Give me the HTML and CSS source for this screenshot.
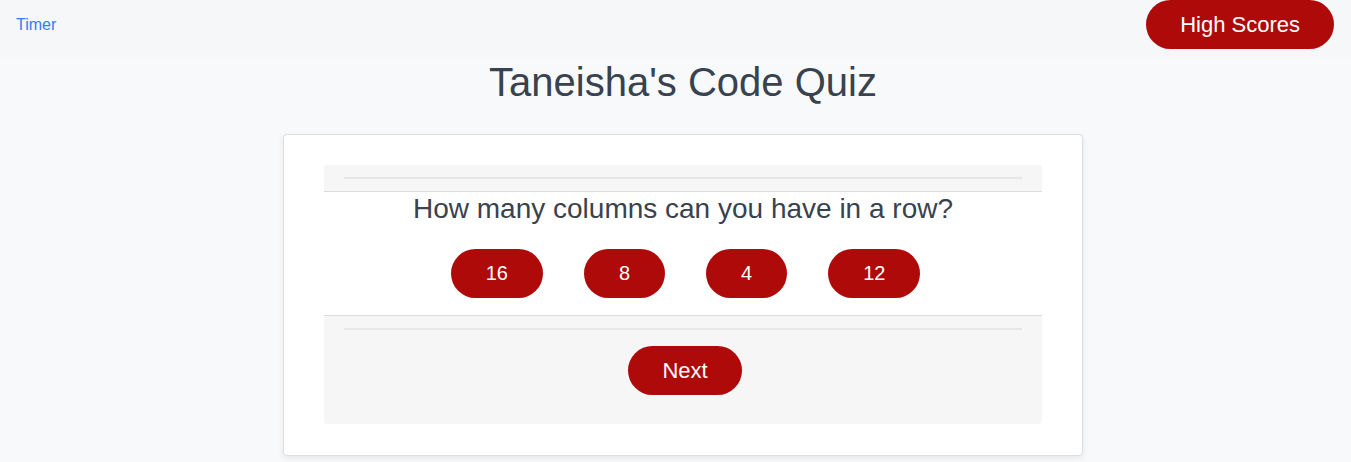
FILE: index.html
```html
<!DOCTYPE html>
<html lang="en">
<head>
<meta charset="utf-8">
<title>Taneisha's Code Quiz</title>
<link rel="stylesheet" href="styles.css">
</head>
<body>
<nav class="topbar">
  <a class="timer" href="#">Timer</a>
  <button class="btn btn-lg" type="button">High Scores</button>
</nav>
<main class="page">
  <h1 class="title">Taneisha's Code Quiz</h1>
  <section class="card">
    <div class="quiz">
      <div class="quiz-head"><hr class="rule"></div>
      <div class="quiz-body">
        <p class="question">How many columns can you have in a row?</p>
        <div class="answers">
          <button class="btn" type="button">16</button>
          <button class="btn" type="button">8</button>
          <button class="btn" type="button">4</button>
          <button class="btn" type="button">12</button>
        </div>
      </div>
      <div class="quiz-foot">
        <hr class="rule">
        <button class="btn btn-next" type="button">Next</button>
      </div>
    </div>
  </section>
</main>
</body>
</html>
```

FILE: styles.css
```css
* { box-sizing: border-box; }

body {
  margin: 0;
  background: #f8f9fb;
  font-family: "Liberation Sans", Arial, sans-serif;
  color: #39424f;
}

.topbar {
  height: 57px;
  background: #f6f7f9;
  display: flex;
  justify-content: space-between;
  align-items: center;
  padding: 0 17px 8px 16px;
}

.timer {
  color: #2f7ef5;
  text-decoration: none;
  font-size: 16px;
}

.btn {
  border: none;
  background: #ae0a0a;
  color: #fff;
  font-family: "Liberation Sans", Arial, sans-serif;
  font-size: 20px;
  line-height: 25px;
  padding: 12px 35px;
  border-radius: 25px;
  cursor: pointer;
}

.btn-lg {
  font-size: 22px;
  padding: 12px 34px;
}

.page {
  padding-left: 15px;
  padding-bottom: 20px;
}

.title {
  margin: 2px 0 29px;
  text-align: center;
  font-size: 40px;
  line-height: 46px;
  font-weight: normal;
  color: #39424f;
}

.card {
  width: 800px;
  margin: 0 auto;
  background: #fff;
  border: 1px solid #dedede;
  border-radius: 4px;
  box-shadow: 0 2px 6px rgba(0, 0, 0, 0.08);
  padding: 30px 40px 31px;
}

.quiz-head {
  background: #f6f6f6;
  border-bottom: 1px solid #dcdcdc;
  border-radius: 3px 3px 0 0;
  padding: 12px 20px;
}

.rule {
  margin: 0;
  border: none;
  height: 2px;
  background: #e6e6e6;
}

.quiz-body {
  padding: 0 0 17px;
  text-align: center;
}

.question {
  margin: 0;
  font-size: 28px;
  line-height: 34px;
}

.answers {
  display: flex;
  justify-content: center;
  gap: 41px;
  margin-top: 23px;
  padding-left: 5px;
}

.quiz-foot {
  background: #f6f6f6;
  border-top: 1px solid #dcdcdc;
  border-radius: 0 0 3px 3px;
  padding: 12px 20px 29px;
  display: flex;
  flex-direction: column;
  align-items: center;
}

.quiz-foot .rule {
  align-self: stretch;
  margin-bottom: 16px;
}

.btn-next {
  font-size: 22px;
  padding: 12px 34px;
  margin-left: 4px;
}
```
